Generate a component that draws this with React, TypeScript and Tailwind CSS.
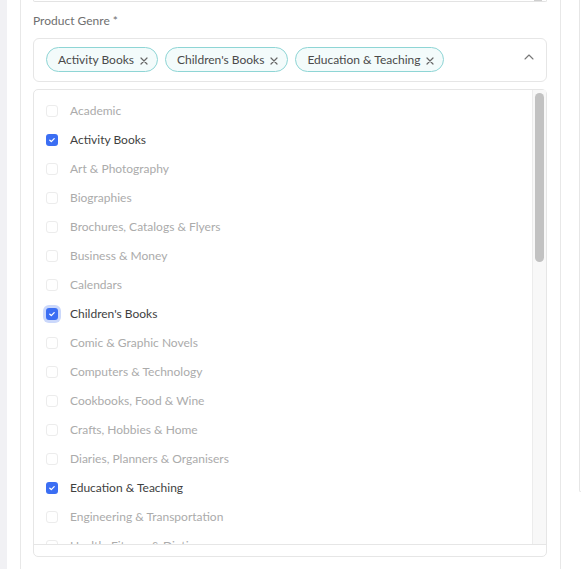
import React from "react";

const genres = [
  "Academic",
  "Activity Books",
  "Art & Photography",
  "Biographies",
  "Brochures, Catalogs & Flyers",
  "Business & Money",
  "Calendars",
  "Children's Books",
  "Comic & Graphic Novels",
  "Computers & Technology",
  "Cookbooks, Food & Wine",
  "Crafts, Hobbies & Home",
  "Diaries, Planners & Organisers",
  "Education & Teaching",
  "Engineering & Transportation",
  "Health, Fitness & Dieting",
];

const selected = ["Activity Books", "Children's Books", "Education & Teaching"];
const focused = "Children's Books";

function Chip({ label }: { label: string }) {
  return (
    <span className="flex h-[25px] items-center gap-[6px] rounded-full border border-[#8ed5d5] bg-[#f3fbfb] pl-[11px] pr-[9px] text-[12px] text-[#4a4a4a]">
      {label}
      <svg width="8" height="8" viewBox="0 0 8 8" className="mt-[2px]">
        <path d="M1 1L7 7M7 1L1 7" stroke="#666" strokeWidth="1.2" strokeLinecap="round" />
      </svg>
    </span>
  );
}

function Checkbox({ checked, ring }: { checked: boolean; ring?: boolean }) {
  if (!checked) {
    return <span className="h-[12px] w-[12px] rounded-[3px] border border-[#ececec] bg-white" />;
  }
  return (
    <span
      className={
        "flex h-[12px] w-[12px] items-center justify-center rounded-[3px] bg-[#3b6ef3] " +
        (ring ? "ring-[3px] ring-[#cbd8fb]" : "")
      }
    >
      <svg width="8" height="8" viewBox="0 0 8 8">
        <path d="M1.8 4.2L3.3 5.6L6.2 2.6" stroke="#fff" strokeWidth="1.3" fill="none" strokeLinecap="round" strokeLinejoin="round" />
      </svg>
    </span>
  );
}

export default function App() {
  return (
    <div className="flex h-[569px] w-[581px] overflow-hidden bg-white font-['Lato',sans-serif]">
      <div className="w-[7px] shrink-0 bg-[#f1f1f4]" />
      <div className="w-[13px] shrink-0" />
      <div className="flex w-[541px] shrink-0 flex-col border-x border-[#e8e8e8] pl-[12px] pr-[13px]">
        {/* bottom edge of the field above */}
        <div className="relative h-[2px] rounded-b-[5px] border-x border-b border-[#e3e3e3]">
          <span className="absolute right-[4px] top-[-2px] h-[3px] w-[8px] border-b border-[#cfcfcf]" />
        </div>

        <label className="mt-[11px] h-[16px] text-[12px] leading-[16px] text-[#6f6f6f]">Product Genre *</label>

        <div className="mt-[9px] flex h-[44px] items-start justify-between rounded-[6px] border border-[#e6e6e6] pl-[12px] pr-[12px] pt-[8px]">
          <div className="flex gap-[7px]">
            {selected.map((s) => (
              <Chip key={s} label={s} />
            ))}
          </div>
          <svg width="10" height="6" viewBox="0 0 10 6" className="mt-[7px]">
            <path d="M1 5L5 1L9 5" stroke="#777" strokeWidth="1.1" fill="none" strokeLinecap="round" strokeLinejoin="round" />
          </svg>
        </div>

        <div className="mt-[7px] flex h-[468px] flex-col rounded-[5px] border border-[#e6e6e6]">
          <div className="flex h-[455px] overflow-hidden border-b border-[#e6e6e6]">
            <ul className="flex-1 pt-[6px]">
              {genres.map((g) => {
                const on = selected.includes(g);
                return (
                  <li key={g} className="flex h-[29.07px] items-center gap-[12px] pl-[12px]">
                    <Checkbox checked={on} ring={g === focused} />
                    <span className={"text-[12px] " + (on ? "text-[#3f3f3f]" : "text-[#ababab]")}>{g}</span>
                  </li>
                );
              })}
            </ul>
            {/* scrollbar */}
            <div className="w-[14px] shrink-0 border-l border-[#ececec] bg-[#f8f8f8] pl-[2px] pt-[3px]">
              <div className="h-[169px] w-[9px] rounded-full bg-[#c2c2c2]" />
            </div>
          </div>
        </div>
      </div>
      <div className="ml-[18px] h-[492px] flex-1 rounded-bl-[5px] border-b border-l border-[#e6e6e6]" />
    </div>
  );
}
